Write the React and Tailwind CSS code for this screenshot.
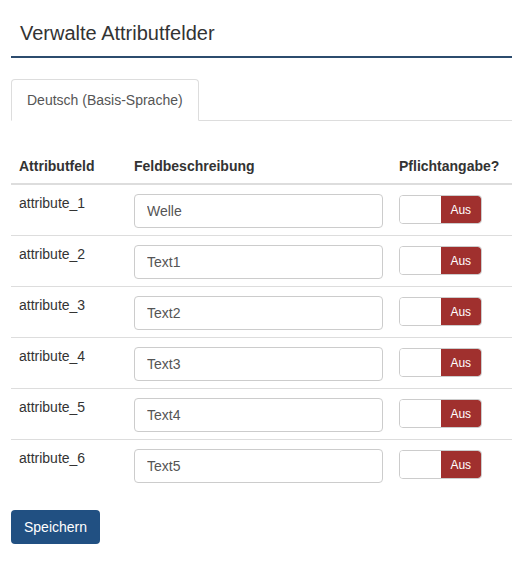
import React, { useState } from 'react';

const initialRows = [
  { id: 'attribute_1', value: 'Welle' },
  { id: 'attribute_2', value: 'Text1' },
  { id: 'attribute_3', value: 'Text2' },
  { id: 'attribute_4', value: 'Text3' },
  { id: 'attribute_5', value: 'Text4' },
  { id: 'attribute_6', value: 'Text5' },
];

function Switch({ on, onToggle }) {
  return (
    <button
      type="button"
      onClick={onToggle}
      className="mt-[2px] flex h-[29px] w-[83px] overflow-hidden rounded-[4px] border border-[#ccc] bg-white"
    >
      <span className="h-full w-[41px] bg-white" />
      <span className="flex h-full w-[41px] items-center justify-center rounded-r-[3px] bg-[#a0302e] text-[12px] text-white">
        {on ? 'An' : 'Aus'}
      </span>
    </button>
  );
}

export default function App() {
  const [rows, setRows] = useState(initialRows);
  const [required, setRequired] = useState({});

  const handleChange = (id, value) => {
    setRows(prev => prev.map(r => (r.id === id ? { ...r, value } : r)));
  };

  return (
    <div className="min-h-screen bg-white pl-[11px] font-['Liberation_Sans',Arial,sans-serif] text-[14px] text-[#333]">
      <h1 className="border-b-2 border-[#2c4c6e] pl-[9px] pt-[21px] pb-[11px] text-[20px] leading-[24px] font-normal">
        Verwalte Attributfelder
      </h1>

      <div className="mt-[21px] flex border-b border-[#ddd]">
        <div className="-mb-px rounded-t-[4px] border border-b-white border-[#ddd] bg-white px-[15px] py-[10px] leading-[20px] text-[#555]">
          Deutsch (Basis-Sprache)
        </div>
      </div>

      <table className="mt-[35px] w-full border-collapse">
        <thead>
          <tr className="border-b-2 border-[#ddd]">
            <th className="w-[115px] px-[8px] pb-[7px] text-left font-bold leading-[20px]">Attributfeld</th>
            <th className="w-[265px] px-[8px] pb-[7px] text-left font-bold leading-[20px]">Feldbeschreibung</th>
            <th className="px-[8px] pb-[7px] text-left font-bold leading-[20px]">Pflichtangabe?</th>
          </tr>
        </thead>
        <tbody>
          {rows.map((r, i) => (
            <tr key={r.id} className={i > 0 ? 'border-t border-[#ddd]' : ''}>
              <td className="px-[8px] pt-[8px] pb-[7px] align-top leading-[20px]">{r.id}</td>
              <td className="px-[8px] pt-[8px] pb-[7px] align-top">
                <input
                  value={r.value}
                  onChange={e => handleChange(r.id, e.target.value)}
                  className="mt-px block h-[34px] w-full rounded-[4px] border border-[#ccc] px-[12px] text-[14px] text-[#555] outline-none"
                />
              </td>
              <td className="px-[8px] pt-[8px] pb-[7px] align-top">
                <Switch
                  on={!!required[r.id]}
                  onToggle={() => setRequired(prev => ({ ...prev, [r.id]: !prev[r.id] }))}
                />
              </td>
            </tr>
          ))}
        </tbody>
      </table>

      <button
        type="button"
        className="mt-[20px] h-[34px] rounded-[4px] bg-[#215082] px-[13px] text-[14px] text-white"
      >
        Speichern
      </button>
    </div>
  );
}
